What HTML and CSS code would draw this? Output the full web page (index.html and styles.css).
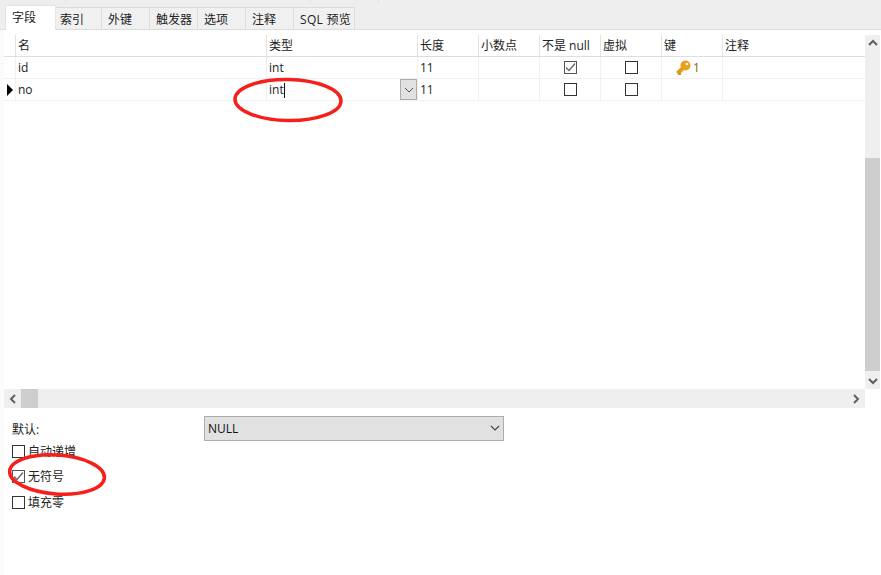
FILE: index.html
```html
<!DOCTYPE html>
<html lang="zh">
<head>
<meta charset="utf-8">
<title>字段</title>
<link rel="stylesheet" href="styles.css">
</head>
<body>
<div class="page">
  <nav class="tabs">
    <i class="tick t1"></i><i class="tick t2"></i><i class="tick t3"></i>
    <span class="tab active">字段</span>
    <span class="tab w46">索引</span>
    <span class="tab w48">外键</span>
    <span class="tab w48">触发器</span>
    <span class="tab w48">选项</span>
    <span class="tab w48">注释</span>
    <span class="tab w61">SQL 预览</span>
  </nav>
  <section class="editor">
    <div class="body-col">
      <div class="grid-area">
        <div class="row head">
          <div class="cell mark"></div>
          <div class="cell">名</div>
          <div class="cell">类型</div>
          <div class="cell">长度</div>
          <div class="cell">小数点</div>
          <div class="cell">不是 null</div>
          <div class="cell">虚拟</div>
          <div class="cell">键</div>
          <div class="cell">注释</div>
        </div>
        <div class="row">
          <div class="cell mark"></div>
          <div class="cell">id</div>
          <div class="cell">int</div>
          <div class="cell">11</div>
          <div class="cell"></div>
          <div class="cell center"><span class="check on"><svg viewBox="0 0 11 11" width="11" height="11"><path d="M1 5.500 4 8.500 10 1.500" fill="none" stroke="#666" stroke-width="1.300"/></svg></span></div>
          <div class="cell center"><span class="check"></span></div>
          <div class="cell keycell">
            <svg class="key" viewBox="0 0 16 16" width="16" height="16"><path d="M8 8 2.500 13.500" fill="none" stroke="#e29a1c" stroke-width="4"/><path d="M3 15h3v-2H3z" fill="#d98f14"/><circle cx="10.500" cy="5.500" r="5" fill="#e7a11f"/><circle cx="12" cy="4" r="1.300" fill="#fff6dc"/></svg>
            <span class="keynum">1</span>
          </div>
          <div class="cell"></div>
        </div>
        <div class="row">
          <div class="cell mark"><span class="pointer"></span></div>
          <div class="cell">no</div>
          <div class="cell typecell"><span>int</span><span class="caret"></span>
            <span class="dropbtn"><svg viewBox="0 0 10 6" width="10" height="6"><path d="M1 1 5 5 9 1" fill="none" stroke="#555" stroke-width="1"/></svg></span>
          </div>
          <div class="cell">11</div>
          <div class="cell"></div>
          <div class="cell center"><span class="check"></span></div>
          <div class="cell center"><span class="check"></span></div>
          <div class="cell"></div>
          <div class="cell"></div>
        </div>
      </div>
      <div class="hscroll">
        <svg class="arrow" viewBox="0 0 8 10" width="8" height="10"><path d="M6 1 2 5 6 9" fill="none" stroke="#606060" stroke-width="2"/></svg>
        <div class="htrack"><div class="hthumb"></div></div>
        <svg class="arrow" viewBox="0 0 8 10" width="8" height="10"><path d="M2 1 6 5 2 9" fill="none" stroke="#606060" stroke-width="2"/></svg>
      </div>
    </div>
    <div class="vscroll">
      <svg class="varrow" viewBox="0 0 10 8" width="10" height="8"><path d="M1 6 5 2 9 6" fill="none" stroke="#606060" stroke-width="2"/></svg>
      <div class="vtrack"><div class="vthumb"></div></div>
      <svg class="varrow" viewBox="0 0 10 8" width="10" height="8"><path d="M1 2 5 6 9 2" fill="none" stroke="#606060" stroke-width="2"/></svg>
    </div>
  </section>
  <section class="form">
    <div class="default-row">
      <span class="default-label">默认:</span>
      <div class="select"><span>NULL</span><svg viewBox="0 0 10 6" width="10" height="6"><path d="M1 1 5 5 9 1" fill="none" stroke="#444" stroke-width="1.100"/></svg></div>
    </div>
    <label class="opt opt-first"><span class="check"></span>自动递增</label>
    <label class="opt"><span class="check on"><svg viewBox="0 0 11 11" width="11" height="11"><path d="M1 5.500 4 8.500 10 1.500" fill="none" stroke="#666" stroke-width="1.300"/></svg></span>无符号</label>
    <label class="opt"><span class="check"></span>填充零</label>
  </section>
  <svg class="ring ring-type" viewBox="0 0 114 48" width="114" height="48"><ellipse cx="57" cy="24" rx="53" ry="20.500" fill="none" stroke="#f5201c" stroke-width="3.500" transform="rotate(1 57 24)"/></svg>
  <svg class="ring ring-unsigned" viewBox="0 0 104 48" width="104" height="48"><ellipse cx="52" cy="24.500" rx="47.500" ry="19.500" fill="none" stroke="#f5201c" stroke-width="3.500" transform="rotate(4 52 24.500)"/></svg>
</div>
</body>
</html>
```

FILE: styles.css
```css
* { box-sizing: border-box; }
html, body { margin: 0; padding: 0; background: #fff; }
body {
  font-family: "Open Sans", "Noto Sans CJK SC", sans-serif;
  font-size: 12px;
  color: #222;
}
.page {
  position: relative;
  width: 881px;
  height: 575px;
  overflow: hidden;
  display: flex;
  flex-direction: column;
  padding-left: 4px;
  background: #fff;
}
.page::before {
  content: "";
  position: absolute;
  left: 0; top: 0; bottom: 0;
  width: 4px;
  background: #fbfbfb;
}
.tabs {
  height: 30px;
  margin-left: -4px;
  padding: 5px 0 0 5px;
  display: flex;
  align-items: flex-start;
  background: #eeeeee;
  border-bottom: 1px solid #dfdfdf;
  position: relative;
  z-index: 1;
}
.tick { position: absolute; top: 0; width: 1px; height: 3px; background: #e2e2e2; }
.t1 { left: 65px; }
.t2 { left: 310px; }
.t3 { left: 378px; }
.tab {
  height: 23px;
  margin-top: 2px;
  display: flex;
  align-items: center;
  padding-left: 5px;
  background: #f0f0f0;
  border: 1px solid #dcdcdc;
  border-left: 0;
  white-space: nowrap;
}
.tab.active {
  width: 51px;
  height: 25px;
  margin-top: 0;
  padding: 0 0 2px 6px;
  background: #fff;
  border: 1px solid #e4e4e4;
  border-bottom: 0;
}
.w46 { width: 46px; padding-left: 4px; }
.w48 { width: 48px; padding-left: 6px; }
.w61 { width: 61px; padding-left: 6px; letter-spacing: .3px; }
.editor { display: flex; height: 378px; }
.body-col { width: 861px; display: flex; flex-direction: column; }
.grid-area { flex: 1; padding-top: 5px; }
.row {
  display: grid;
  grid-template-columns: 11px 251px 151px 61px 61px 61px 61px 61px 142px;
  height: 22px;
  border-bottom: 1px solid #f0f0f0;
}
.head { border-bottom-color: #dedede; }
.cell {
  border-left: 1px solid #f0f0f0;
  padding: 1px 0 0 2px;
  display: flex;
  align-items: center;
  line-height: 20px;
  position: relative;
  white-space: nowrap;
}
.cell.mark { border-left: 0; padding: 0 0 0 3px; }
.head .cell { border-left-color: #e2e2e2; }
.center { justify-content: center; align-items: flex-start; padding: 4px 0 0; }
.pointer {
  width: 0; height: 0;
  border-left: 6px solid #000;
  border-top: 6px solid transparent;
  border-bottom: 6px solid transparent;
}
.check {
  width: 13px; height: 13px;
  border: 1px solid #333;
  background: #fff;
  display: inline-flex;
  align-items: center;
  justify-content: center;
  flex: none;
}
.check.on { border-color: #555; }
.keycell { padding-left: 13px; gap: 2px; }
.keynum { color: #8a5a1a; }
.caret { width: 1px; height: 15px; background: #111; }
.dropbtn {
  position: absolute;
  right: 0; top: 0;
  width: 17px; height: 21px;
  background: #e1e1e1;
  border: 1px solid #adadad;
  display: flex;
  align-items: center;
  justify-content: center;
}
.hscroll {
  height: 19px;
  background: #efefef;
  display: flex;
  align-items: center;
  padding: 0 5px;
}
.htrack { flex: 1; height: 100%; padding-left: 4px; }
.hthumb { width: 17px; height: 100%; background: #cdcdcd; }
.arrow { flex: none; }
.vscroll {
  width: 15px;
  margin-top: 5px;
  height: 354px;
  background: #efefef;
  display: flex;
  flex-direction: column;
  align-items: center;
  padding: 4px 0;
}
.vtrack { flex: 1; width: 100%; padding-top: 111px; padding-bottom: 4px; }
.vthumb { width: 100%; height: 213px; background: #cdcdcd; }
.form { padding: 7px 0 0 8px; }
.default-row { display: flex; align-items: center; height: 26px; }
.default-label { width: 192px; margin-top: 2px; }
.select {
  width: 300px; height: 25px;
  background: #e1e1e1;
  border: 1px solid #adadad;
  display: flex;
  align-items: center;
  justify-content: space-between;
  padding: 0 3px;
  color: #111;
}
.opt {
  display: flex;
  align-items: center;
  gap: 3px;
  height: 26px;
}
.opt-first { height: 20px; margin-bottom: 2px; }
.ring { position: absolute; }
.ring-type { left: 231px; top: 76px; }
.ring-unsigned { left: 5px; top: 450px; }
```
